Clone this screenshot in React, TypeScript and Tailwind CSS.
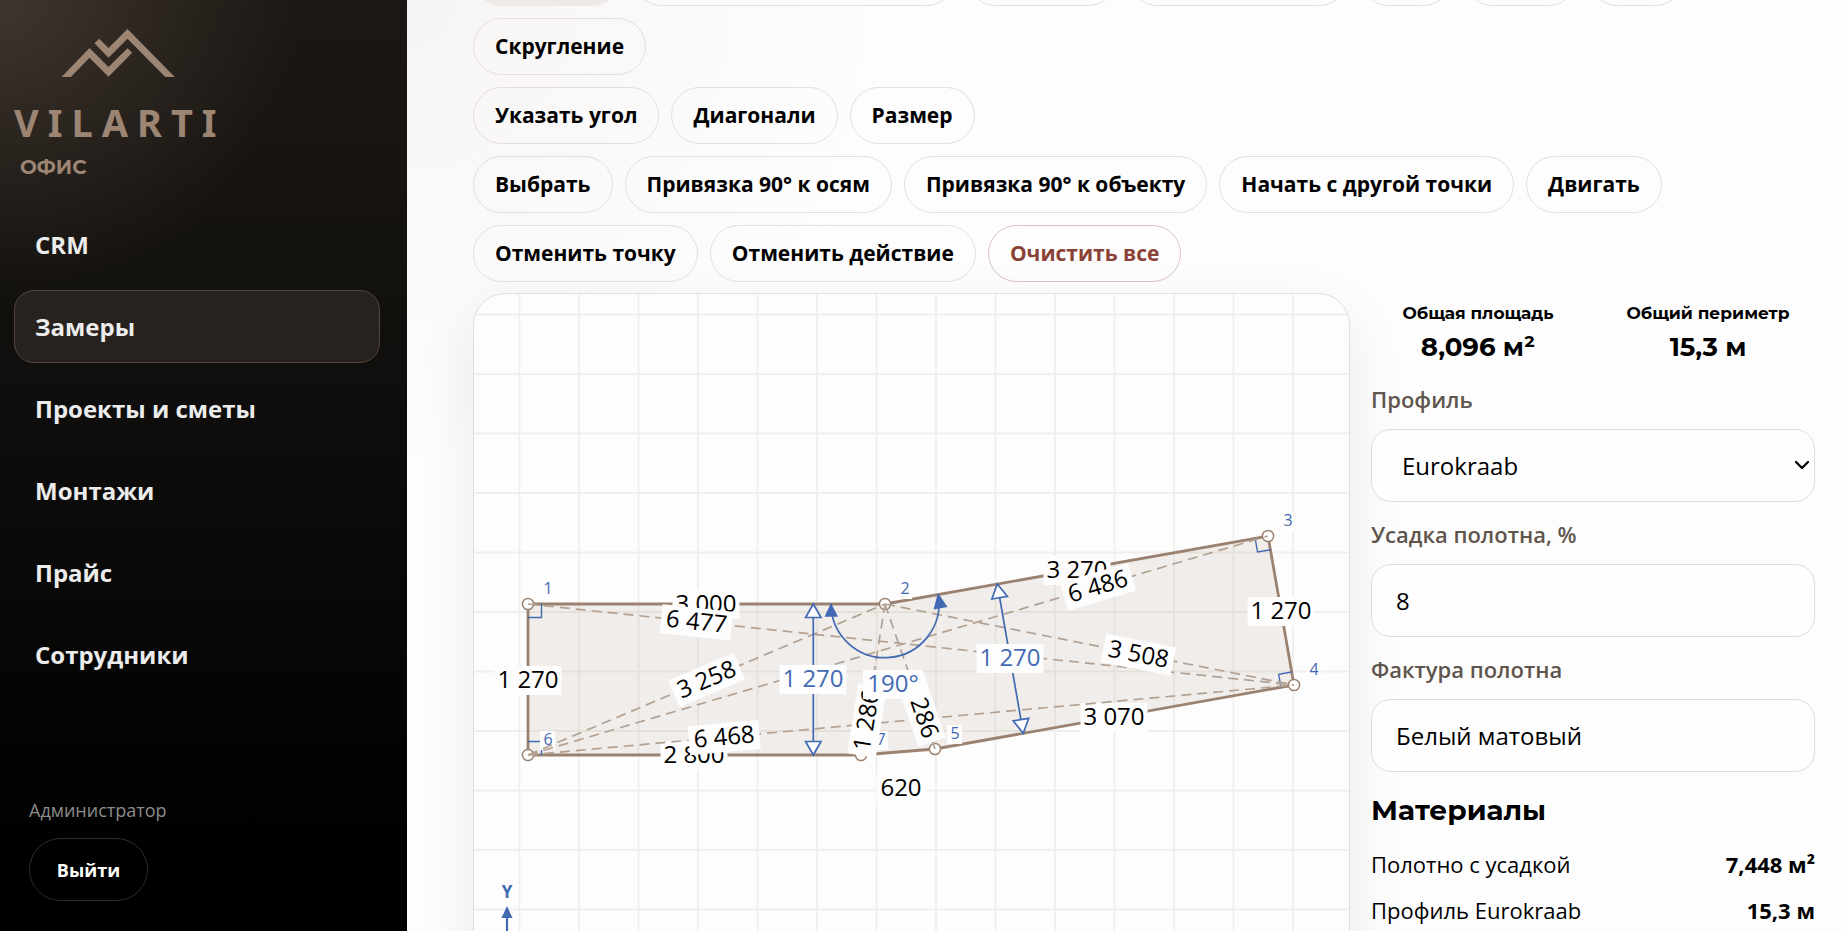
import { clsx } from 'clsx';
import { ChevronDown } from 'lucide-react';

type Point = { x: number; y: number };

const navItems = ['CRM', 'Замеры', 'Проекты и сметы', 'Монтажи', 'Прайс', 'Сотрудники'];

// Drawing modes, icon-free pills that sit above the fold
const modes = [
  { width: 'w-[148px]', active: true },
  { width: 'w-[322px]' },
  { width: 'w-[150px]' },
  { width: 'w-[219px]' },
  { width: 'w-[92px]' },
  { width: 'w-[113px]' },
  { width: 'w-[95px]' },
];

const materials = [
  { name: 'Полотно с усадкой', value: '7,448 м²' },
  { name: 'Профиль Eurokraab', value: '15,3 м' },
];

// Ceiling corners, in canvas units
const corners: Point[] = [
  { x: 528, y: 604 },
  { x: 885, y: 604 },
  { x: 1268, y: 536 },
  { x: 1294, y: 685 },
  { x: 935, y: 749 },
  { x: 528, y: 755 },
  { x: 861, y: 755 },
];

const outline = [1, 2, 3, 4, 5, 7, 6];

// t is where the label sits along the diagonal
const diagonals = [
  { from: 1, to: 4, t: 0.22, label: '6 477' },
  { from: 6, to: 2, t: 0.5, label: '3 258' },
  { from: 6, to: 4, t: 0.256, label: '6 468' },
  { from: 6, to: 3, t: 0.77, label: '6 486' },
  { from: 2, to: 4, t: 0.62, label: '3 508' },
  { from: 7, to: 2, t: 0.23, label: '1 286' },
  { from: 2, to: 5, t: 0.72, label: '1 286' },
];

const sides = [
  { x: 706, y: 604, label: '3 000' },
  { x: 1077, y: 570, label: '3 270' },
  { x: 1281, y: 611, label: '1 270' },
  { x: 1114, y: 717, label: '3 070' },
  { x: 901, y: 788, label: '620', width: 49 },
  { x: 694, y: 755, label: '2 800' },
  { x: 528, y: 680, label: '1 270' },
];

const corner = (n: number) => corners[n - 1];

export default function App() {
  return (
    <div className="flex h-screen overflow-hidden bg-[#fdfdfd] font-['Open_Sans','Noto_Sans',sans-serif] text-black">
      <Sidebar />
      <main className="min-w-0 flex-1 overflow-hidden bg-[radial-gradient(circle_at_top_left,#f7f5f4_0%,#fdfdfd_480px)] pl-[66px] pr-[31px]">
        <Toolbar />
        <div className="mt-[11px] grid grid-cols-[minmax(0,1fr)_444px] items-start gap-[21px]">
          <div className="overflow-hidden rounded-[32px] border border-[#e2dfdc] bg-[#fdfdfd] shadow-[0_20px_60px_rgba(0,0,0,0.08)]">
            <Plan />
          </div>
          <Details />
        </div>
      </main>
    </div>
  );
}

function Sidebar() {
  return (
    <aside className="flex w-[407px] shrink-0 flex-col bg-[radial-gradient(circle_at_top_left,rgba(155,130,112,0.28)_0%,rgba(155,130,112,0)_300px),linear-gradient(180deg,#1c1814_0%,#100f0d_40%,#000_92%)] pl-3.5 pr-[27px]">
      <a href="#" className="mt-7 block text-[#9d8574]">
        <svg viewBox="0 0 114 49" className="ml-[47px] h-[49px] w-[114px]" fill="currentColor" aria-hidden="true">
          <path d="M0.5 49 28.5 20 47.5 39 66.5 20.3 71.2 24.7 47.5 48.7 28.5 29.7 9.8 49Z" />
          <path d="M33.5 15.3 38.2 10.7 47.5 20 66.5 1 113.8 49H104.2L66.5 10.7 47.5 29.7Z" />
        </svg>
        <span className="mt-[21px] block font-['Noto_Sans',sans-serif] text-[38px] font-bold leading-[48px] tracking-[9px]">VILARTI</span>
        <span className="ml-1.5 mt-[9px] block font-['Montserrat','Inter',sans-serif] text-xl font-bold leading-6">ОФИС</span>
      </a>

      <nav className="mt-[29px] flex flex-col gap-[9px]">
        {navItems.map((item) => (
          <a
            key={item}
            href="#"
            className={clsx(
              'flex h-[73px] items-center rounded-[20px] border px-5 text-2xl font-bold text-[#ececec]',
              item === 'Замеры' ? 'border-[#55463d] bg-[#28221e]' : 'border-transparent'
            )}
          >
            {item}
          </a>
        ))}
      </nav>

      <div className="mb-[30px] mt-auto pl-[15px]">
        <p className="text-lg leading-6 text-[#8c8c8c]">Администратор</p>
        <button className="mt-4 h-[63px] w-[119px] rounded-full border border-[#2e2e2e] text-lg font-bold text-white">
          Выйти
        </button>
      </div>
    </aside>
  );
}

function Tool({ label, danger = false }: { label: string; danger?: boolean }) {
  return (
    <button
      className={clsx(
        'h-[57px] rounded-full border px-[21px] text-[21px] font-bold',
        danger ? 'border-[#dcc3c0] text-[#8b4236]' : 'border-[#e5dfdb]'
      )}
    >
      {label}
    </button>
  );
}

function Toolbar() {
  return (
    <div className="-mt-[51px] flex flex-col gap-3">
      <div className="flex flex-wrap gap-3">
        {modes.map((mode, i) => (
          <button
            key={i}
            aria-label={`Режим ${i + 1}`}
            className={clsx(
              'h-[57px] rounded-full border',
              mode.width,
              mode.active ? 'border-[#eeeae7] bg-[#eeeae7]' : 'border-[#e5dfdb]'
            )}
          />
        ))}
        <Tool label="Скругление" />
      </div>
      <div className="flex flex-wrap gap-3">
        <Tool label="Указать угол" />
        <Tool label="Диагонали" />
        <Tool label="Размер" />
      </div>
      <div className="flex flex-wrap gap-3">
        <Tool label="Выбрать" />
        <Tool label="Привязка 90° к осям" />
        <Tool label="Привязка 90° к объекту" />
        <Tool label="Начать с другой точки" />
        <Tool label="Двигать" />
        <Tool label="Отменить точку" />
        <Tool label="Отменить действие" />
        <Tool label="Очистить все" danger />
      </div>
    </div>
  );
}

function Tag({ x, y, label, width = 67, angle = 0, color = '#000' }: { x: number; y: number; label: string; width?: number; angle?: number; color?: string }) {
  return (
    <g transform={`translate(${x} ${y}) rotate(${angle})`}>
      <rect x={-width / 2} y={-14} width={width} height={29} fill="#fdfdfd" />
      <text y={8} fontSize={24} textAnchor="middle" fill={color}>{label}</text>
    </g>
  );
}

function Plan() {
  return (
    <svg viewBox="474 294 875 860" className="block w-full" role="img" aria-label="План потолка">
      <g stroke="#f1efeb" strokeWidth={1.8}>
        {Array.from({ length: 14 }, (_, i) => (
          <path key={i} d={`M${519.5 + i * 59.5} 294V1154`} />
        ))}
        {Array.from({ length: 15 }, (_, i) => (
          <path key={i} d={`M474 ${314.5 + i * 59.5}H1349`} />
        ))}
      </g>

      <polygon
        points={outline.map((n) => `${corner(n).x},${corner(n).y}`).join(' ')}
        fill="rgba(155,130,112,0.13)"
        stroke="#9b8270"
        strokeWidth={2.8}
      />

      {sides.map((s, i) => (
        <Tag key={i} {...s} />
      ))}

      <g fill="none" stroke="#426ab3" strokeWidth={1.4}>
        <path d="M541.5 604V617.5H528" />
        <path d="M528 741.5H541.5V755" />
        <path d="M1255.3 539 1257.5 552 1270.7 549.7" />
        <path d="M1291.7 672 1278.7 674.3 1281 687.5" />
      </g>

      {corners.map((p, i) => (
        <g key={i}>
          <circle cx={p.x} cy={p.y} r={5.6} fill="#fff" stroke="#9b8270" strokeWidth={1.5} />
          <rect x={p.x + 12} y={p.y - 24} width={15} height={19} fill="#fdfdfd" />
          <text x={p.x + 20} y={p.y - 10} fontSize={16} textAnchor="middle" fill="#426ab3">{i + 1}</text>
        </g>
      ))}

      {diagonals.map((d) => (
        <path
          key={`${d.from}-${d.to}`}
          d={`M${corner(d.from).x} ${corner(d.from).y}L${corner(d.to).x} ${corner(d.to).y}`}
          stroke="#b3a293"
          strokeWidth={1.7}
          strokeDasharray="10 6"
        />
      ))}
      {diagonals.map((d) => {
        const a = corner(d.from);
        const b = corner(d.to);
        return (
          <Tag
            key={`${d.from}-${d.to}`}
            x={a.x + (b.x - a.x) * d.t}
            y={a.y + (b.y - a.y) * d.t}
            angle={(Math.atan2(b.y - a.y, b.x - a.x) * 180) / Math.PI}
            width={71}
            label={d.label}
          />
        );
      })}

      {/* Height dimensions and the angle at corner 2 */}
      <g fill="#fff" stroke="#426ab3" strokeWidth={1.7}>
        <path d="M813.3 604V755M997.3 584 1023.3 733.3" />
        <path d="M813.3 604 821 617.5H805.6ZM813.3 755 821 741.5H805.6Z" />
        <path d="M997.3 584 1007.4 596.4 991.9 599ZM1023.3 733.3 1028.7 718.3 1013.2 720.9Z" />
        <path d="M831 604A54 54 0 1 0 938.3 595" fill="none" />
      </g>
      <path d="M831 603 838 616.7H824.5ZM938 593 947.5 607 933.5 609.5Z" fill="#426ab3" />
      <Tag x={813} y={679} label="1 270" color="#426ab3" />
      <Tag x={1010} y={658} label="1 270" color="#426ab3" />
      <Tag x={893} y={684} label="190°" width={60} color="#426ab3" />

      <path d="M507 915V1114" stroke="#426ab3" strokeWidth={2.2} />
      <path d="M507 906 512.5 918H501.5Z" fill="#426ab3" />
      <text x={507} y={898} fontSize={17} fontWeight={700} textAnchor="middle" fill="#426ab3">Y</text>
    </svg>
  );
}

const fieldClass = 'block w-full rounded-[20px] border border-[#e2dbd6] bg-[#fefefe] text-2xl outline-none';
const labelClass = 'block text-[22px] font-semibold leading-8 text-[#5f554d]';

function Details() {
  return (
    <aside className="pt-1.5">
      <dl className="grid grid-cols-2 gap-4 text-center font-['Montserrat','Inter',sans-serif] font-bold">
        <div>
          <dt className="text-[17px] leading-7">Общая площадь</dt>
          <dd className="mt-0.5 text-[26px] leading-9">8,096 м²</dd>
        </div>
        <div>
          <dt className="text-[17px] leading-7">Общий периметр</dt>
          <dd className="mt-0.5 text-[26px] leading-9">15,3 м</dd>
        </div>
      </dl>

      <label htmlFor="profile" className={clsx(labelClass, 'mt-[18px]')}>Профиль</label>
      <div className="relative mt-3.5">
        <select id="profile" defaultValue="Eurokraab" className={clsx(fieldClass, 'h-[73px] appearance-none px-[30px]')}>
          <option>Eurokraab</option>
        </select>
        <ChevronDown className="pointer-events-none absolute right-px top-6 h-6 w-6" strokeWidth={2.3} />
      </div>

      <label htmlFor="shrink" className={clsx(labelClass, 'mt-4')}>Усадка полотна, %</label>
      <input id="shrink" defaultValue="8" className={clsx(fieldClass, 'mt-3.5 h-[73px] px-[24px]')} />

      <label htmlFor="texture" className={clsx(labelClass, 'mt-4')}>Фактура полотна</label>
      <input id="texture" defaultValue="Белый матовый" className={clsx(fieldClass, 'mt-3.5 h-[73px] px-[24px]')} />

      <h2 className="mt-5 font-['Montserrat','Inter',sans-serif] text-[28px] font-bold leading-9">Материалы</h2>
      <ul className="mt-5 flex flex-col gap-3.5">
        {materials.map((m) => (
          <li key={m.name} className="flex justify-between text-[22px] leading-8">
            <span>{m.name}</span>
            <strong className="font-bold">{m.value}</strong>
          </li>
        ))}
      </ul>
    </aside>
  );
}
